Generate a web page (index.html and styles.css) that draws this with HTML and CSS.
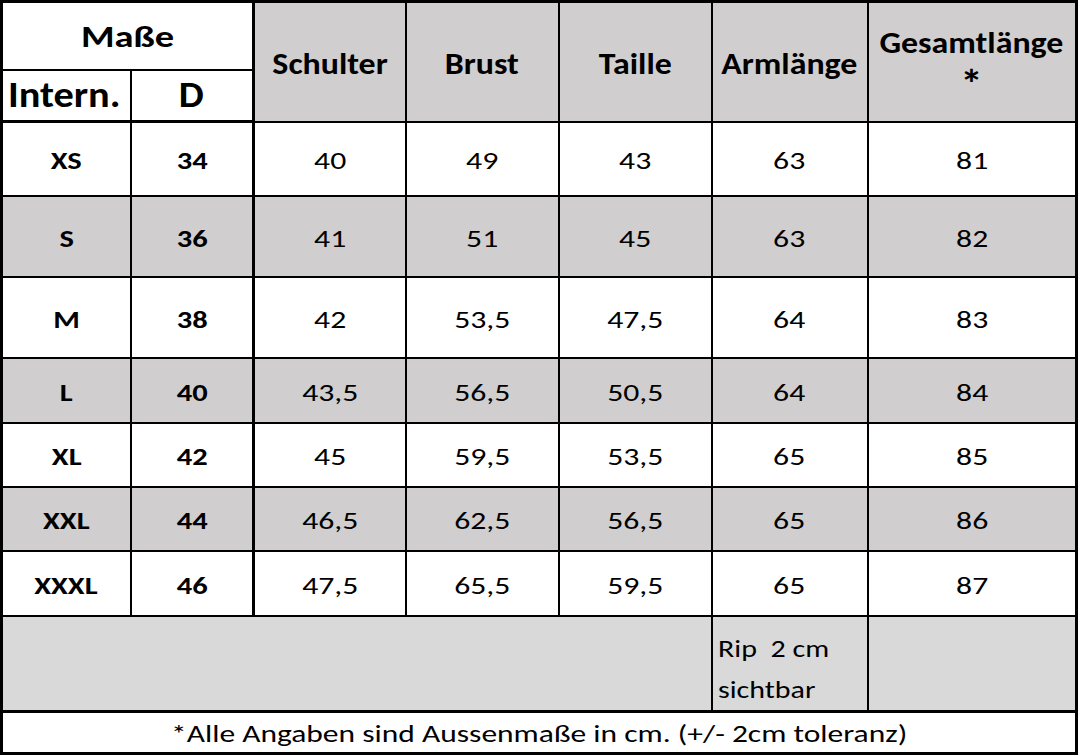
FILE: index.html
```html
<!DOCTYPE html>
<html lang="de">
<head>
<meta charset="utf-8">
<title>Maßtabelle</title>
<link rel="stylesheet" href="styles.css">
</head>
<body>
<table class="sizes">
  <colgroup>
    <col class="c-intern">
    <col class="c-d">
    <col class="c-schulter">
    <col class="c-brust">
    <col class="c-taille">
    <col class="c-arm">
    <col class="c-gesamt">
  </colgroup>
  <thead>
    <tr class="r-head1">
      <th colspan="2" class="masse"><span class="t">Maße</span></th>
      <th rowspan="2" class="gray sep-left"><span class="t">Schulter</span></th>
      <th rowspan="2" class="gray"><span class="t">Brust</span></th>
      <th rowspan="2" class="gray"><span class="t">Taille</span></th>
      <th rowspan="2" class="gray"><span class="t">Armlänge</span></th>
      <th rowspan="2" class="gray gesamt"><span class="t">Gesamtlänge<br><span class="star">*</span></span></th>
    </tr>
    <tr class="r-head2">
      <th class="big intern"><span class="t">Intern.</span></th>
      <th class="big"><span class="t">D</span></th>
    </tr>
  </thead>
  <tbody>
    <tr class="r-xs"><th><span class="t">XS</span></th><th><span class="t">34</span></th><td class="sep-left"><span class="t">40</span></td><td><span class="t">49</span></td><td><span class="t">43</span></td><td><span class="t">63</span></td><td><span class="t">81</span></td></tr>
    <tr class="r-s gray"><th><span class="t">S</span></th><th><span class="t">36</span></th><td class="sep-left"><span class="t">41</span></td><td><span class="t">51</span></td><td><span class="t">45</span></td><td><span class="t">63</span></td><td><span class="t">82</span></td></tr>
    <tr class="r-m"><th><span class="t">M</span></th><th><span class="t">38</span></th><td class="sep-left"><span class="t">42</span></td><td><span class="t">53,5</span></td><td><span class="t">47,5</span></td><td><span class="t">64</span></td><td><span class="t">83</span></td></tr>
    <tr class="r-l gray"><th><span class="t">L</span></th><th><span class="t">40</span></th><td class="sep-left"><span class="t">43,5</span></td><td><span class="t">56,5</span></td><td><span class="t">50,5</span></td><td><span class="t">64</span></td><td><span class="t">84</span></td></tr>
    <tr class="r-xl"><th><span class="t">XL</span></th><th><span class="t">42</span></th><td class="sep-left"><span class="t">45</span></td><td><span class="t">59,5</span></td><td><span class="t">53,5</span></td><td><span class="t">65</span></td><td><span class="t">85</span></td></tr>
    <tr class="r-xxl gray"><th><span class="t">XXL</span></th><th><span class="t">44</span></th><td class="sep-left"><span class="t">46,5</span></td><td><span class="t">62,5</span></td><td><span class="t">56,5</span></td><td><span class="t">65</span></td><td><span class="t">86</span></td></tr>
    <tr class="r-xxxl"><th><span class="t">XXXL</span></th><th><span class="t">46</span></th><td class="sep-left"><span class="t">47,5</span></td><td><span class="t">65,5</span></td><td><span class="t">59,5</span></td><td><span class="t">65</span></td><td><span class="t">87</span></td></tr>
    <tr class="r-note light">
      <td colspan="5"></td>
      <td class="note"><span class="t">Rip&nbsp; 2 cm<br>sichtbar</span></td>
      <td></td>
    </tr>
  </tbody>
  <tfoot>
    <tr class="r-foot">
      <td colspan="7" class="foot"><span class="t">*Alle Angaben sind Aussenmaße in cm. (+/- 2cm toleranz)</span></td>
    </tr>
  </tfoot>
</table>
</body>
</html>
```

FILE: styles.css
```css
html, body {
  margin: 0;
  padding: 0;
  background: #ffffff;
}

body {
  width: 1080px;
  height: 755px;
  overflow: hidden;
}

.sizes {
  border-collapse: collapse;
  table-layout: fixed;
  width: 1078px;
  font-family: "Carlito", "Lato", sans-serif;
  color: #000;
  border: 3px solid #000;
}

.c-intern { width: 129px; }
.c-d { width: 123px; }
.c-schulter { width: 152px; }
.c-brust { width: 153px; }
.c-taille { width: 153px; }
.c-arm { width: 156px; }
.c-gesamt { width: 209px; }

.sizes th,
.sizes td {
  border: 2px solid #000;
  padding: 0;
  text-align: center;
  vertical-align: middle;
  white-space: nowrap;
}

/* horizontally stretched glyphs, as in the original chart */
.t {
  display: inline-block;
  transform-origin: 50% 50%;
}

.sizes tbody th,
.sizes tbody td {
  padding-top: 4px;
}

.sizes tbody th {
  font-weight: 700;
  font-size: 24px;
}

.sizes tbody th .t {
  transform: scaleX(1.27);
}

.sizes tbody td {
  font-weight: 400;
  font-size: 24px;
}

.sizes tbody td .t {
  transform: scaleX(1.32);
}

.sizes thead th {
  font-weight: 700;
  font-size: 30px;
  padding-top: 3px;
}

.sizes thead th .t {
  transform: scaleX(1.13);
}

.sizes thead th.masse {
  padding-top: 0;
  font-size: 31px;
}

.sizes thead th.masse .t {
  transform: scaleX(1.24);
}

.sizes thead th.big {
  font-size: 36px;
  padding-top: 0;
}

.sizes thead th.big .t {
  transform: scaleX(1.1);
}

.sizes thead th.intern .t {
  margin-left: -5px;
  transform: scaleX(1.12);
}

.sizes thead th.gesamt {
  line-height: 38px;
  padding-top: 0;
}

.star {
  display: inline-block;
  font-size: 40px;
  line-height: 30px;
  height: 30px;
  margin-top: 2px;
  vertical-align: top;
  padding-top: 6px;
}

.sizes thead tr.r-head2 th {
  border-bottom: 3px solid #000;
}

.sizes .sep-left {
  border-left: 3px solid #000;
}

.gray,
.gray th,
.gray td {
  background: #d0cece;
}

.light td {
  background: #d9d9d9;
}

.r-head1 { height: 68px; }
.r-head2 { height: 52px; }
.r-xs { height: 74px; }
.r-s { height: 81px; }
.r-m { height: 81px; }
.r-l { height: 65px; }
.r-xl { height: 64px; }
.r-xxl { height: 64px; }
.r-xxxl { height: 65px; }
.r-note { height: 93px; }
.r-foot { height: 42px; }

.sizes tbody td.note {
  text-align: left;
  vertical-align: top;
  padding: 11px 0 0 5px;
  line-height: 41px;
}

.sizes tbody td.note .t {
  transform-origin: 0 50%;
  transform: scaleX(1.25);
}

.sizes .r-note td {
  border-bottom: 3px solid #000;
}

.sizes td.foot {
  font-size: 25px;
  background: #ffffff;
  line-height: 36px;
  padding-top: 3px;
}

.sizes td.foot .t {
  transform: scaleX(1.26);
}
```
